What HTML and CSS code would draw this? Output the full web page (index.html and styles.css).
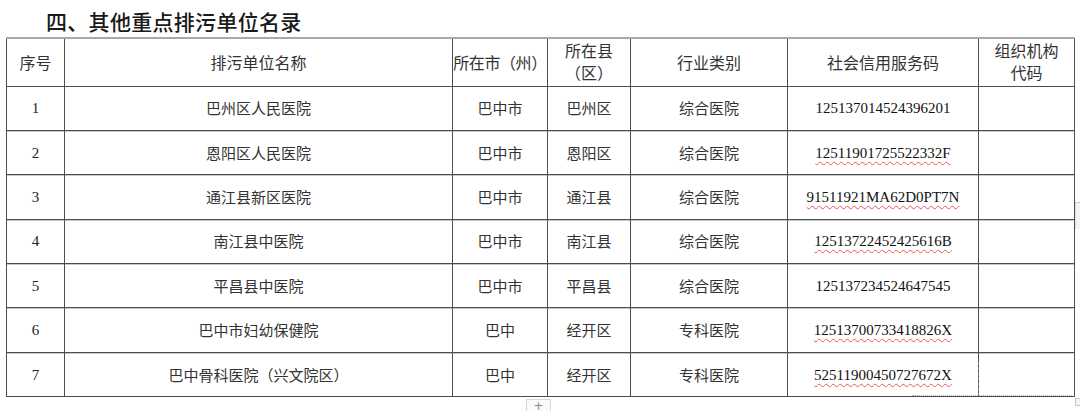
FILE: index.html
```html
<!DOCTYPE html>
<html lang="zh-CN">
<head>
<meta charset="utf-8">
<title>其他重点排污单位名录</title>
<link rel="stylesheet" href="styles.css">
</head>
<body>
<div class="page">
  <h1 class="title">四、其他重点排污单位名录</h1>
  <table class="list">
    <colgroup>
      <col class="c-no"><col class="c-name"><col class="c-city"><col class="c-county"><col class="c-type"><col class="c-code"><col class="c-org">
    </colgroup>
    <thead>
      <tr class="head">
        <th>序号</th>
        <th>排污单位名称</th>
        <th class="tight">所在市（州）</th>
        <th class="two">所在县<br>（区）</th>
        <th>行业类别</th>
        <th>社会信用服务码</th>
        <th class="two">组织机构<br>代码</th>
      </tr>
    </thead>
    <tbody>
      <tr><td class="num">1</td><td>巴州区人民医院</td><td>巴中市</td><td>巴州区</td><td>综合医院</td><td class="code"><span>125137014524396201</span></td><td></td></tr>
      <tr><td class="num">2</td><td>恩阳区人民医院</td><td>巴中市</td><td>恩阳区</td><td>综合医院</td><td class="code"><span class="wavy">12511901725522332F</span></td><td></td></tr>
      <tr><td class="num">3</td><td>通江县新区医院</td><td>巴中市</td><td>通江县</td><td>综合医院</td><td class="code"><span class="wavy">91511921MA62D0PT7N</span></td><td></td></tr>
      <tr><td class="num">4</td><td>南江县中医院</td><td>巴中市</td><td>南江县</td><td>综合医院</td><td class="code"><span class="wavy">12513722452425616B</span></td><td></td></tr>
      <tr><td class="num">5</td><td>平昌县中医院</td><td>巴中市</td><td>平昌县</td><td>综合医院</td><td class="code"><span>125137234524647545</span></td><td></td></tr>
      <tr><td class="num">6</td><td>巴中市妇幼保健院</td><td>巴中</td><td>经开区</td><td>专科医院</td><td class="code"><span class="wavy">12513700733418826X</span></td><td></td></tr>
      <tr><td class="num">7</td><td>巴中骨科医院（兴文院区）</td><td>巴中</td><td>经开区</td><td>专科医院</td><td class="code"><span class="wavy">52511900450727672X</span></td><td></td></tr>
    </tbody>
  </table>
  <div class="add-btn">+</div>
  <div class="edge-mark"></div>
  <div class="corner-mark"></div>
  <div class="sel-v"></div>
  <div class="sel-h"></div>
</div>
</body>
</html>
```
FILE: styles.css
```css
html, body {
  margin: 0;
  padding: 0;
  background: #fff;
}
body {
  width: 1080px;
  height: 411px;
  overflow: hidden;
  font-family: "Noto Sans CJK SC", "Noto Sans", sans-serif;
  color: #333;
}
.page {
  position: relative;
  width: 1080px;
  height: 411px;
  padding-top: 7px;
  box-sizing: border-box;
}
.title {
  margin: 0 0 0 46px;
  font-size: 21px;
  line-height: 29px;
  height: 30px;
  font-weight: 500;
  color: #1a1a1a;
  letter-spacing: 0.3px;
}
.list {
  margin-left: 6px;
  border-collapse: collapse;
  table-layout: fixed;
  width: 1068px;
}
.c-no { width: 58px; }
.c-name { width: 388px; }
.c-city { width: 95px; }
.c-county { width: 83px; }
.c-type { width: 157px; }
.c-code { width: 191px; }
.c-org { width: 96px; }
.list th, .list td {
  border: 1px solid #4d4d4d;
  padding: 0;
  text-align: center;
  vertical-align: middle;
}
.list th {
  font-weight: 400;
  font-size: 16px;
  line-height: 22px;
  color: #333;
}
.list th.two {
  padding-bottom: 2px;
}
.list thead tr {
  border-top: 2px solid #a8a8a8;
}
.list th.tight {
  letter-spacing: -0.4px;
  white-space: nowrap;
}
.head { height: 48px; }
.list tbody tr { height: 44.4px; }
.list tbody tr + tr td {
  box-shadow: inset 0 1px 0 #c9c9c9;
}
.list td {
  font-size: 15px;
  line-height: 20px;
  color: #333;
}
.list td.num {
  font-family: "Liberation Serif", "Times New Roman", serif;
  color: #222;
}
.list td.code {
  font-family: "Liberation Serif", "Times New Roman", serif;
  color: #111;
}
.wavy {
  text-decoration: underline wavy #e8555a;
  text-decoration-thickness: 1px;
  text-underline-offset: 3px;
}
.add-btn {
  position: absolute;
  left: 526px;
  top: 399px;
  width: 25px;
  height: 14px;
  border: 1px solid #d6d6d6;
  border-bottom: none;
  box-sizing: border-box;
  background: #fafafa;
  color: #888;
  font-family: "DejaVu Sans", sans-serif;
  font-size: 12px;
  line-height: 12px;
  text-align: center;
}
.edge-mark {
  position: absolute;
  left: 1075px;
  top: 202px;
  width: 6px;
  height: 26px;
  border-top: 1px solid #c8c8c8;
  border-left: 1px solid #e0e0e0;
  background: #f4f4f4;
}
.corner-mark {
  position: absolute;
  left: 1075px;
  top: 398px;
  width: 6px;
  height: 6px;
  border: 1px solid #c8c8c8;
  background: #f4f4f4;
}
.sel-v {
  position: absolute;
  left: 978px;
  top: 362px;
  height: 34px;
  border-left: 1px dashed #8a8a8a;
}
.sel-h {
  position: absolute;
  left: 912px;
  top: 395px;
  width: 160px;
  border-top: 1px dotted #b0b0b0;
}
```
